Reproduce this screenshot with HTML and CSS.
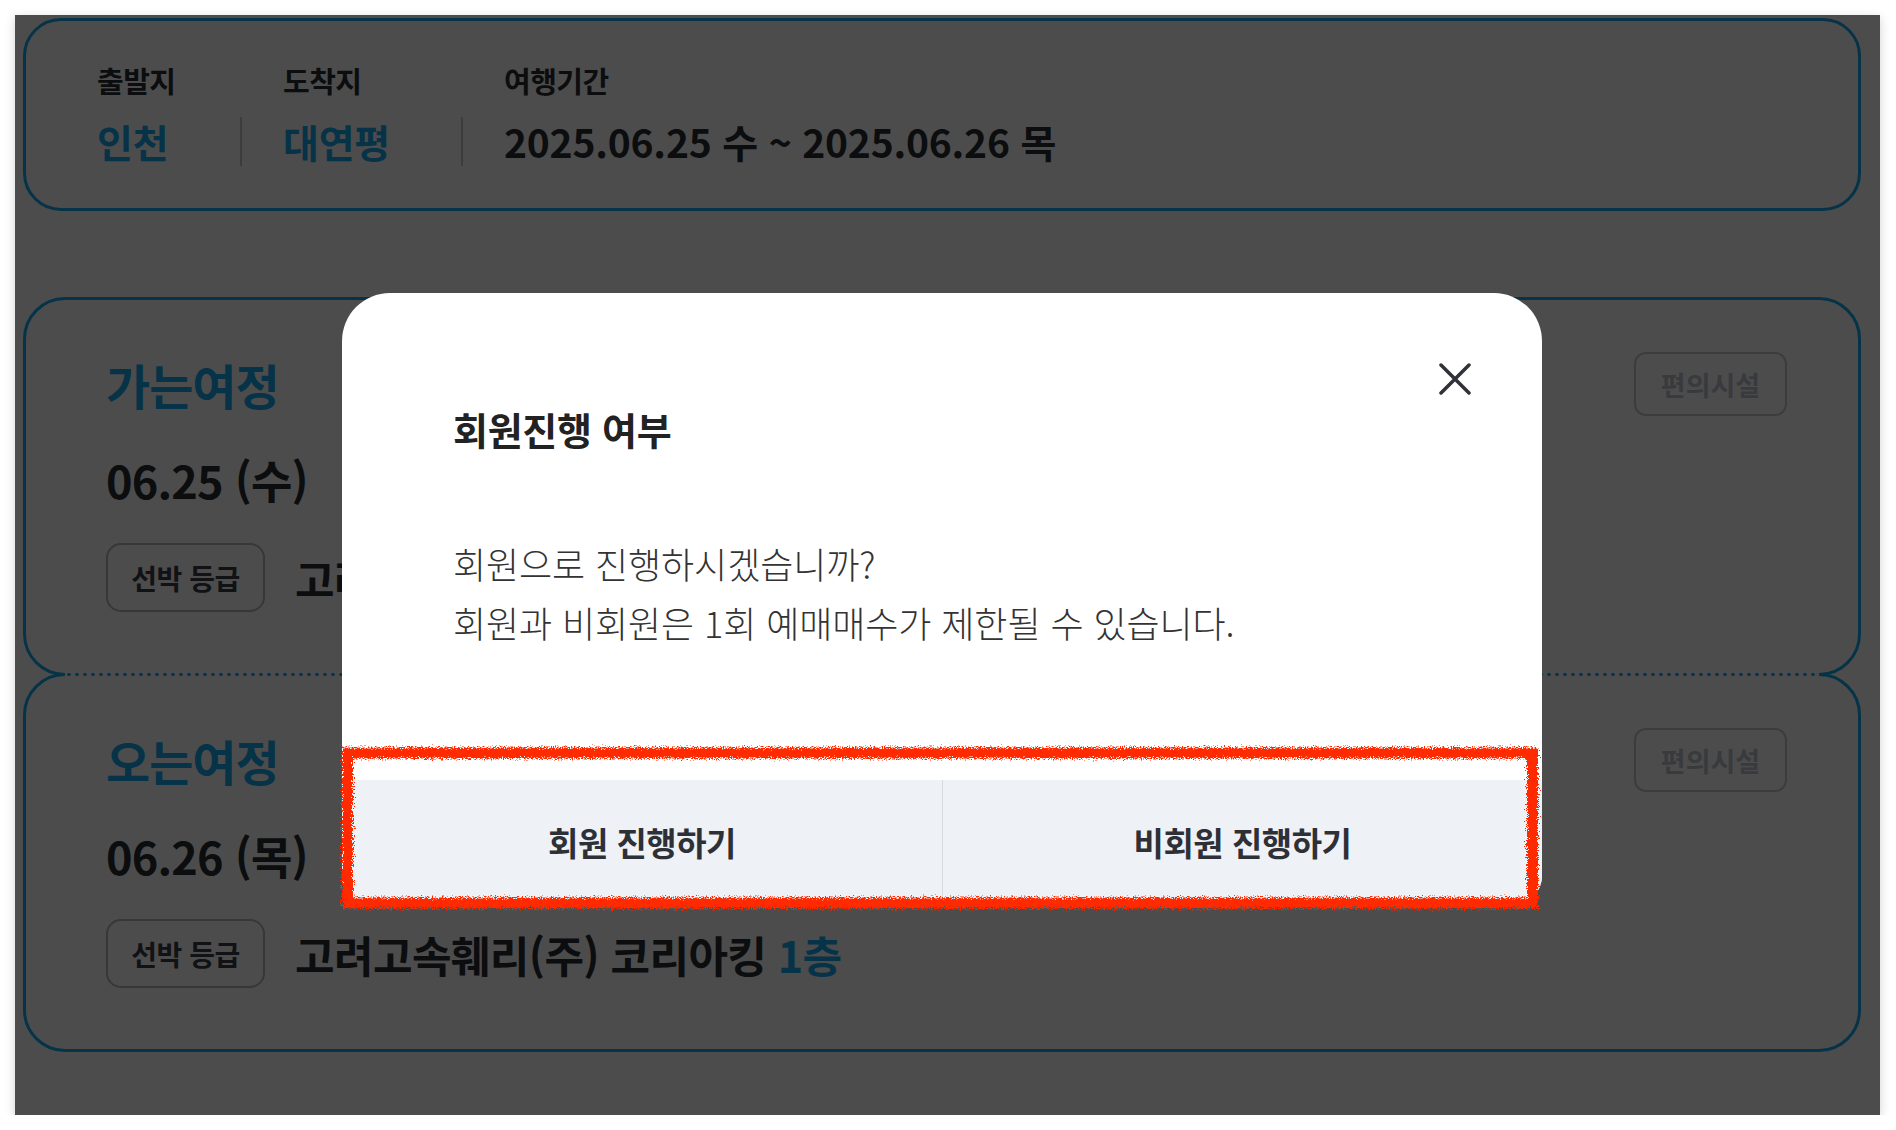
FILE: index.html
```html
<!DOCTYPE html>
<html lang="ko">
<head>
    <meta charset="UTF-8">
    <meta name="viewport" content="width=device-width, initial-scale=1.0">
    <title>회원진행 여부</title>
    <link rel="stylesheet" href="styles.css">
</head>
<body>
    <div class="shot">
        <div class="page">
            <section class="summary">
                <div class="summary-col">
                    <div class="summary-label">출발지</div>
                    <div class="summary-value accent sep">인천</div>
                </div>
                <div class="summary-col">
                    <div class="summary-label">도착지</div>
                    <div class="summary-value accent sep">대연평</div>
                </div>
                <div class="summary-col">
                    <div class="summary-label">여행기간</div>
                    <div class="summary-value">2025.06.25 수 ~ 2025.06.26 목</div>
                </div>
            </section>

            <div class="voyages">
                <section class="voyage voyage-go">
                    <div class="voyage-head">
                        <h2 class="voyage-title">가는여정</h2>
                        <button class="facility-btn">편의시설</button>
                    </div>
                    <div class="voyage-date">06.25 (수)</div>
                    <div class="voyage-ship">
                        <span class="grade-badge">선박 등급</span>
                        <span class="ship-name">고려고속훼리(주) 코리아킹 <em>1층</em></span>
                    </div>
                </section>
                <section class="voyage voyage-back">
                    <div class="voyage-head">
                        <h2 class="voyage-title">오는여정</h2>
                        <button class="facility-btn">편의시설</button>
                    </div>
                    <div class="voyage-date">06.26 (목)</div>
                    <div class="voyage-ship">
                        <span class="grade-badge">선박 등급</span>
                        <span class="ship-name">고려고속훼리(주) 코리아킹 <em>1층</em></span>
                    </div>
                </section>
            </div>
        </div>

        <div class="dim"></div>

        <div class="modal">
            <button class="modal-close" aria-label="닫기">
                <svg width="32" height="32" viewBox="0 0 32 32">
                    <path d="M2 2 L30 30 M30 2 L2 30" stroke="#2f3237" stroke-width="3.5" stroke-linecap="round" fill="none"/>
                </svg>
            </button>
            <h3 class="modal-title">회원진행 여부</h3>
            <p class="modal-text">회원으로 진행하시겠습니까?<br>회원과 비회원은 1회 예매매수가 제한될 수 있습니다.</p>
            <div class="modal-actions">
                <button class="modal-btn">회원 진행하기</button>
                <button class="modal-btn">비회원 진행하기</button>
            </div>
        </div>

        <svg class="mark" width="1205" height="170" viewBox="0 0 1205 170">
            <defs>
                <filter id="rough" x="-5%" y="-20%" width="110%" height="140%">
                    <feTurbulence type="fractalNoise" baseFrequency="0.9" numOctaves="3" seed="7"/>
                    <feDisplacementMap in="SourceGraphic" scale="9"/>
                </filter>
            </defs>
            <rect x="9.5" y="10" width="1185" height="150" fill="none" stroke="#ff2a06" stroke-width="11" filter="url(#rough)"/>
        </svg>
    </div>
</body>
</html>
```

FILE: styles.css
```css
body {
    margin: 0;
    background: #fff;
    font-family: "Noto Sans CJK KR", "Noto Sans", sans-serif;
    color: #2a2d33;
}

.shot {
    position: relative;
    margin: 15px 0 0 15px;
    width: 1865px;
    height: 1100px;
    overflow: hidden;
    background: #fff;
    box-shadow: 0 3px 10px rgba(0, 0, 0, 0.18);
}

.page {
    position: relative;
    z-index: 0;
    padding: 3px 19px 0 8px;
}

.summary {
    box-sizing: border-box;
    height: 193px;
    border: 3px solid #14acef;
    border-radius: 38px;
    padding: 40px 0 0 71px;
    display: grid;
    grid-template-columns: 145px 221px auto;
}

.summary-col + .summary-col {
    padding-left: 41px;
}

.summary-label {
    font-size: 29px;
    font-weight: 700;
    line-height: 38px;
    letter-spacing: -0.5px;
}

.summary-value {
    margin-top: 18px;
    font-size: 39px;
    font-weight: 700;
    line-height: 49px;
    white-space: nowrap;
    letter-spacing: -0.2px;
}

.summary-value.sep {
    border-right: 2px solid #c8c8c8;
}

.accent {
    color: #14acef;
}

.voyages {
    margin-top: 86px;
}

.voyage {
    border: 3px solid #14acef;
    border-radius: 42px;
    padding: 52px 71px 61px 80px;
}

.voyage-go {
    position: relative;
}

.voyage-go::after {
    content: "";
    position: absolute;
    left: 39px;
    right: 39px;
    bottom: -3px;
    height: 3px;
    z-index: 1;
    background: radial-gradient(circle at 4px 1.5px, #14acef 1.5px, transparent 1.9px) 0 0 / 8px 3px repeat-x, #fff;
}

.voyage-back {
    margin-top: -3px;
}

.voyage-head {
    display: flex;
    justify-content: space-between;
    align-items: center;
}

.voyage-title {
    margin: 0;
    font-size: 48px;
    font-weight: 700;
    line-height: 57px;
    letter-spacing: -1px;
    color: #14acef;
}

.facility-btn {
    width: 153px;
    height: 64px;
    border: 2px solid #c5cad3;
    border-radius: 12px;
    background: #fff;
    font-family: inherit;
    font-size: 27px;
    font-weight: 700;
    color: #c0c4cc;
}

.voyage-date {
    margin-top: 38px;
    font-size: 45px;
    font-weight: 700;
    line-height: 52px;
    letter-spacing: -0.8px;
}

.voyage-ship {
    margin-top: 37px;
    display: flex;
    align-items: center;
}

.grade-badge {
    box-sizing: border-box;
    height: 69px;
    width: 159px;
    display: flex;
    align-items: center;
    justify-content: center;
    border: 2px solid #b3b8c1;
    border-radius: 15px;
    font-size: 28px;
    font-weight: 700;
    letter-spacing: -0.5px;
    color: #393e46;
}

.ship-name {
    margin-left: 30px;
    font-size: 43px;
    font-weight: 700;
    letter-spacing: -0.6px;
}

.ship-name em {
    font-style: normal;
    color: #14acef;
}

.dim {
    position: absolute;
    inset: 0;
    background: rgba(0, 0, 0, 0.7);
}

.modal {
    position: absolute;
    left: 327px;
    top: 278px;
    width: 1200px;
    height: 611px;
    box-sizing: border-box;
    padding: 112px 0 0;
    background: #fff;
    border-radius: 48px 48px 28px 28px;
    overflow: hidden;
    display: flex;
    flex-direction: column;
}

.modal-close {
    position: absolute;
    top: 70px;
    right: 71px;
    width: 32px;
    height: 32px;
    padding: 0;
    border: none;
    background: none;
}

.modal-title {
    margin: 0 111px;
    font-size: 38px;
    font-weight: 700;
    line-height: 48px;
    letter-spacing: -0.3px;
    color: #222;
}

.modal-text {
    margin: 81px 111px 0;
    font-size: 36px;
    font-weight: 300;
    line-height: 59px;
    letter-spacing: -0.1px;
    color: #333;
}

.modal-actions {
    margin-top: auto;
    height: 124px;
    display: grid;
    grid-template-columns: 1fr 1fr;
    background: #eef1f5;
}

.modal-btn {
    border: none;
    background: none;
    font-family: inherit;
    font-size: 33px;
    font-weight: 700;
    letter-spacing: -0.5px;
    color: #2d3036;
}

.modal-btn + .modal-btn {
    border-left: 1px solid #d6d9de;
}

.mark {
    position: absolute;
    left: 323px;
    top: 728px;
}
```
